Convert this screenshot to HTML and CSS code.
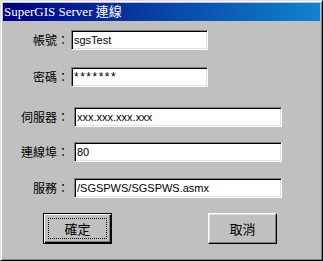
FILE: index.html
```html
<!DOCTYPE html>
<html>
<head>
<meta charset="utf-8">
<link rel="stylesheet" href="styles.css">
</head>
<body>
<div class="window">
  <div class="titlebar"><span class="title">SuperGIS Server 連線</span></div>
  <div class="content">
    <div class="row row1">
      <label class="label">帳號：</label>
      <input class="field field-short" type="text" value="sgsTest">
    </div>
    <div class="row row2">
      <label class="label">密碼：</label>
      <input class="field field-short field-secret" type="text" value="*******">
    </div>
    <div class="row row3">
      <label class="label">伺服器：</label>
      <input class="field field-long" type="text" value="xxx.xxx.xxx.xxx">
    </div>
    <div class="row row4">
      <label class="label">連線埠：</label>
      <input class="field field-long" type="text" value="80">
    </div>
    <div class="row row5">
      <label class="label">服務：</label>
      <input class="field field-long" type="text" value="/SGSPWS/SGSPWS.asmx">
    </div>
    <div class="buttons">
      <button class="btn btn-default"><span class="focus">確定</span></button>
      <button class="btn btn-cancel"><span class="plain">取消</span></button>
    </div>
  </div>
</div>
</body>
</html>
```

FILE: styles.css
```css
html, body {
  margin: 0;
  padding: 0;
  background: #c0c0c0;
}
.window {
  width: 323px;
  height: 261px;
  box-sizing: border-box;
  background: #c0c0c0;
  border: 1px solid;
  border-color: #dfdfdf #000 #000 #dfdfdf;
  box-shadow: inset 1px 1px #fff, inset -1px -1px #808080;
  padding: 2px;
  display: flex;
  flex-direction: column;
}
.titlebar {
  height: 18px;
  background: linear-gradient(to right, #000080, #1084d0);
  display: flex;
  align-items: center;
  padding-left: 1px;
}
.title {
  color: #fff;
  font-family: "Liberation Serif", "Noto Sans CJK TC", serif;
  font-size: 13px;
  line-height: 18px;
  white-space: nowrap;
}
.content {
  display: flex;
  flex-direction: column;
  padding-top: 9px;
  margin-left: -1px;
}
.row {
  display: flex;
  align-items: center;
  height: 20px;
}
.row2 { margin-top: 17px; }
.row3 { margin-top: 20px; }
.row4 { margin-top: 15px; }
.row5 { margin-top: 16px; }
.label {
  width: 67px;
  text-align: right;
  font-family: "Noto Sans CJK TC", sans-serif;
  font-size: 12px;
  line-height: 14px;
  color: #000;
  white-space: nowrap;
}
.field {
  box-sizing: border-box;
  height: 20px;
  border: 1px solid;
  border-color: #808080 #fff #fff #808080;
  box-shadow: inset 1px 1px #000, inset -1px -1px #dfdfdf;
  background: #fff;
  font-family: "Liberation Sans", Arial, sans-serif;
  font-size: 11px;
  color: #000;
  padding: 0 2px;
  margin: 0;
  outline: none;
}
.field-secret {
  font-size: 12px;
  letter-spacing: 1.5px;
}
.field-short {
  margin-left: 2px;
  width: 137px;
}
.field-long {
  margin-left: 5px;
  width: 208px;
}
.buttons {
  display: flex;
  margin-top: 15px;
}
.btn {
  box-sizing: border-box;
  width: 69px;
  height: 31px;
  background: #c0c0c0;
  font-family: "Noto Sans CJK TC", sans-serif;
  font-size: 13px;
  color: #000;
  padding: 0;
  margin: 0;
  display: flex;
}
.btn-default {
  margin-left: 41px;
  border: 1px solid #000;
  box-shadow: inset 1px 1px #fff, inset -1px -1px #000, inset -2px -2px #808080;
  padding: 4px;
}
.focus {
  flex: 1;
  border: 1px dotted #000;
  display: flex;
  align-items: center;
  justify-content: center;
}
.btn-cancel {
  margin-left: 96px;
  border: 1px solid;
  border-color: #fff #000 #000 #fff;
  box-shadow: inset -1px -1px #808080, inset 1px 1px #dfdfdf;
}
.plain {
  flex: 1;
  display: flex;
  align-items: center;
  justify-content: center;
}
```
